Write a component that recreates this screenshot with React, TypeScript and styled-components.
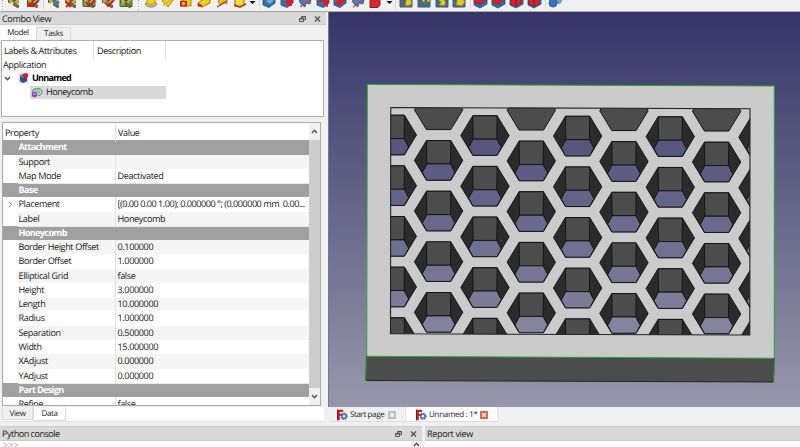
import React from "react";
import styled, { createGlobalStyle } from "styled-components";

const Global = createGlobalStyle`
  * { box-sizing: border-box; }
  html, body { margin: 0; padding: 0; overflow: hidden; }
  body {
    font: 9.1px/14px "Open Sans", "Noto Sans", sans-serif; letter-spacing: -.38px;
    text-rendering: geometricPrecision; color: #202020; background: #f0f0f0;
  }
`;

const Window = styled.div`
  width: 800px; height: 447px; overflow: hidden; background: #f0f0f0;
  display: grid; grid-template-rows: 12px 414px 21px;
`;
const Toolbar = styled.header`
  background: #f0f0f0; border-bottom: 1px solid #a9a9b0; overflow: hidden;
  svg { display: block; }
`;
const Main = styled.main`display: grid; grid-template-columns: 328px 472px; min-height: 0;`;
const Dock = styled.section`display: flex; flex-direction: column; min-width: 0; min-height: 0; height: 414px;`;
const Title = styled.div<{ $w: number; $h: number }>`
  flex: none; width: ${p => p.$w}px; height: ${p => p.$h}px; background: #d9d9d9;
  border-top: 1px solid #cdcdcd; border-bottom: 1px solid #cdcdcd;
  display: flex; align-items: center; justify-content: space-between; padding: 0 5px 0 2px;
`;
const Label = styled.span<{ $ls?: number; $size?: number }>`
  white-space: pre; letter-spacing: ${p => p.$ls ?? -0.38}px; font-size: ${p => p.$size ?? 9.1}px;
`;
const Buttons = styled.span`display: flex; gap: 8px;`;
const TopTabs = styled.div`display: flex; height: 15px; flex: none; align-items: flex-end;`;
const Tab = styled.div<{ $active?: boolean; $w: number }>`
  width: ${p => p.$w}px; height: ${p => (p.$active ? 15 : 13)}px; line-height: ${p => (p.$active ? 14 : 12)}px; text-align: center; font-size: 8px;
  background: ${p => (p.$active ? "#fff" : "#efefef")};
  border: 1px solid ${p => (p.$active ? "#fafafa" : "#dadada")}; border-bottom: 0;
`;
const TreeBox = styled.div`
  flex: none; width: 323px; height: 77px; margin-left: 1px; background: #fff; border: 1px solid #adadb3;
`;
const TreeHeader = styled.div`
  display: grid; grid-template-columns: 92px 72px; height: 17px; line-height: 19px; letter-spacing: -.43px;
  > span { border-right: 1px solid #e3e3e3; padding-left: 2px; white-space: nowrap; }
  > span + span { padding-left: 3px; }
`;
const TreeRow = styled.div<{ $pad: number; $h: number }>`
  display: flex; align-items: center; height: ${p => p.$h}px; padding-left: ${p => p.$pad}px;
`;
const Bold = styled.b`font-weight: 700; margin-left: 3px; color: #000; letter-spacing: -.75px;`;
const Chevron = styled.span`display: flex; margin-right: 7px;`;
const Selected = styled.div`
  display: flex; align-items: center; width: 136px; height: 13px; margin-top: 1px; background: #d9d9d9; gap: 3px; padding-left: 1px;
`;
const PropertyBox = styled.div`
  flex: none; margin: 5px 0 0 2px; width: 319px; height: 284px; background: #fff;
  border: 1px solid #a8a8ae; display: grid; grid-template-columns: 306px 11px; overflow: hidden;
`;
const Table = styled.div`overflow: hidden; height: 282px;`;
const HeaderRow = styled.div`
  display: grid; grid-template-columns: 113px 1fr; height: 17.3px; line-height: 19px;
  > span { padding-left: 2px; } > span:first-child { border-right: 1px solid #e2e2e2; }
`;
const Group = styled.div`
  height: 14.27px; line-height: 14.27px; background: #a0a0a0; color: #fff; font-weight: 700; padding-left: 15.5px; letter-spacing: -.65px;
`;
const Prop = styled.div<{ $alt: boolean; $long: boolean }>`
  height: 14.27px; line-height: 14.5px; display: grid; grid-template-columns: 15px 98px 193px;
  > span { background: ${p => (p.$alt ? "#f5f5f5" : "#fff")}; white-space: pre; border-bottom: 1px solid #e9e9e9; }
  > span:nth-child(2) { border-right: 1px solid #e2e2e2; padding-left: .5px; }
  > span:nth-child(3) { padding-left: 1.5px; letter-spacing: ${p => (p.$long ? -0.48 : -0.38)}px; }
`;
const Expander = styled.i`display: grid; place-items: center; background: #fff; height: 14px;`;
const Scroll = styled.div`
  background: #cdcdcd; display: flex; flex-direction: column; justify-content: space-between; height: 282px;
`;
const ScrollButton = styled.div`height: 17px; background: #f0f0f0; display: grid; place-items: center;`;
const BottomTabs = styled.div`
  display: flex; flex: none; margin: 1px 0 0 2px; width: 322px; height: 15px; background: #fff; border-bottom: 1px solid #e2e2e2;
`;
const BottomTab = styled.div<{ $active?: boolean }>`
  width: ${p => (p.$active ? 33 : 31)}px; height: ${p => (p.$active ? 14 : 13)}px; line-height: 13px;
  text-align: center; font-size: 8px;
  background: ${p => (p.$active ? "#fff" : "#f0f0f0")}; border: 1px solid #dcdcdc; border-top: 0;
`;
const View = styled.section`display: flex; flex-direction: column; height: 414px; > svg { display: block; flex: none; }`;
const DocTabs = styled.div`display: flex; height: 15px; margin-left: 1px;`;
const DocTab = styled.div<{ $active?: boolean }>`
  display: flex; align-items: center; width: ${p => (p.$active ? 92 : 77)}px; height: 15px;
  padding: 2px 9px 0 ${p => (p.$active ? 9 : 7)}px; gap: 2px; color: #222;
  background: ${p => (p.$active ? "#fff" : "#f0f0f0")}; border-bottom: 1px solid #dedede;
  border-right: 1px solid #e2e2e2;
  > svg { flex: none; }
  > svg:last-child { margin-left: auto; }
`;
const Bottom = styled.footer`display: grid; grid-template-columns: 422px 375px; gap: 3px;`;
const Console = styled.div`background: #fff; display: flex; flex-direction: column; height: 21px;`;
const ConsoleBody = styled.div`display: flex; justify-content: space-between; color: #a5a5a5; line-height: 9px; height: 6px; font-size: 8.5px; letter-spacing: .6px; padding-left: 3px;`;
const ConsoleScroll = styled.div`width: 11px; height: 6px; background: #f0f0f0; display: grid; place-items: end center;`;

const WindowButtons = () => (
  <Buttons>
    <svg width="7" height="8" viewBox="0 0 7 8" fill="none" stroke="#555">
      <path d="M2.5 2.8V1.5h4v3.2H5M.5 3.5h4v3h-4zM.5 4h4M2.5 2h4" />
    </svg>
    <svg width="7" height="8" viewBox="0 0 7 8" stroke="#555" strokeWidth="1.4"><path d="M1 1.5l5 5M6 1.5l-5 5" /></svg>
  </Buttons>
);

const Arrow = ({ up }: { up?: boolean }) => (
  <svg width="7" height="5" viewBox="0 0 7 5" fill="none" stroke="#505050" strokeWidth="1.3">
    <path d={up ? "M1 4l2.5-2.7L6 4" : "M1 1l2.5 2.7L6 1"} />
  </svg>
);

const FreeCadIcon = () => (
  <svg width="12" height="12" viewBox="0 0 12 12">
    <path d="M1 .7h6.3v2.4H3.8v1.7h2.5v2.3H3.8v4.2H1z" fill="#cb2229" />
    <path d="M1 .7h1v10.6H1z" fill="#8d141a" />
    <circle cx="8" cy="7.3" r="2.1" fill="none" stroke="#5478b2" strokeWidth="1.7" />
    <circle cx="8" cy="7.3" r="3.2" fill="none" stroke="#4268a5" strokeWidth="1.2" strokeDasharray="1.26 1.25" />
  </svg>
);
const CloseTab = ({ active }: { active?: boolean }) => (
  <svg width="8" height="8" viewBox="0 0 8 8">
    <rect width="8" height="8" rx=".8" fill={active ? "#dc6748" : "#bdbdbd"} />
    <path d="M2.3 2.3l3.4 3.4M5.7 2.3L2.3 5.7" stroke="#fff" strokeWidth="1.3" />
  </svg>
);

type Tool = { x: number; kind: "sketch" | "pad" | "cut" | "pattern" | "dress" | "sphere"; v: number };
const tools: Tool[] = [
  ...[14, 33, 54, 71, 89, 108, 126].map((x, v) => ({ x, kind: "sketch" as const, v })),
  ...[151, 168, 186, 204, 222, 240].map((x, v) => ({ x, kind: "pad" as const, v })),
  ...[269, 287, 305, 323, 340, 358, 375].map((x, v) => ({ x, kind: "cut" as const, v })),
  ...[406, 424, 442, 459].map((x, v) => ({ x, kind: "pattern" as const, v })),
  ...[480, 498, 516, 534].map((x, v) => ({ x, kind: "dress" as const, v })),
  { x: 555, kind: "sphere", v: 0 },
];

const ToolGlyph = ({ kind, v }: Tool) => {
  switch (kind) {
    case "sketch":
      return (
        <>
          {(v === 4 || v === 6) && <path d="M-6-1H6V6.5H-6z" fill="#7aa557" stroke="#39701c" />}
          {v === 1 && <path d="M-6-1H3V7H-6z" fill="#b52725" />}
          <path d="M-6-1H4L5 3 1 4-1 2-6 3z" fill="#5d584a" />
          <path d="M-5 0l3-1 1 3-3 2zM0 2l4-3 1 2-3 3z" fill="#c4b433" />
          <path d="M0 3l5 2.5-1 2.5-5-3z" fill="#77704d" stroke="#3f3d2b" strokeWidth=".6" />
          {v === 2 && <path d="M0 0l6 2-2 3-5-2z" fill="#4b79b7" />}
          {v === 3 && <path d="M-5 2l5 5M0 2l-5 5" stroke="#c31a1f" strokeWidth="1.8" />}
          {(v === 4 || v === 5 || v === 1) && <path d="M-3 2l3 4 6-6" fill="none" stroke="#bd242b" strokeWidth="2" />}
        </>
      );
    case "pad":
      return v === 0 ? (
        <><path d="M-6 4c3-3 9-3 12 0-2 4-10 4-12 0z" fill="#c9c1a0" stroke="#8b812f" /><path d="M-4-1h8v4c-2 2-6 2-8 0z" fill="#f1d526" stroke="#8f7900" strokeWidth=".7" /></>
      ) : v === 1 ? (
        <><path d="M-6 1L0 7 6-1 3-2H-2z" fill="#edce27" stroke="#967b00" strokeWidth=".8" /><path d="M-5 6L4-1" stroke="#dc9a29" /></>
      ) : v === 2 ? (
        <><path d="M-5 1L5-2V6H-5z" fill="#f0cf1c" stroke="#a66b00" strokeWidth=".8" /><path d="M-6 1H1V6.5H-6z" fill="#d31920" /><circle cx="-2.5" cy="3.5" r="1.8" fill="#f0cf1c" /></>
      ) : v === 3 ? (
        <><path d="M-6 3L1-2 6 0V3L-2 7-6 6z" fill="#edcd1f" stroke="#8d7c00" /><path d="M-6 3l4 2v2l-4-1z" fill="#cf2025" /></>
      ) : v === 4 ? (
        <><path d="M-4 1L1-2 5 0 5 4 1 2-2 5z" fill="#e6c922" stroke="#8c7900" strokeWidth=".8" /><path d="M-5 7L5 1" stroke="#cb2229" strokeWidth="1.3" /></>
      ) : (
        <><path d="M-5-2H4V5L0 7-5 6z" fill="#f3df3d" stroke="#827400" /><path d="M-6 5L0 7 6 4" fill="none" stroke="#bf2925" strokeWidth="1.4" /></>
      );
    case "cut":
      return v === 2 || v === 5 ? (
        <><path d="M-6 1L-1-2 6 0 5 4 1 3 0 7-4 4z" fill="#4b80b9" stroke="#28466e" strokeWidth=".7" /><path d="M-5 7L5 0" stroke="#cf3a45" strokeWidth="1.2" /></>
      ) : v === 6 ? (
        <path d="M-5-2H5V5L3 7.5H-5z" fill="#dc252a" stroke="#6d2940" />
      ) : (
        <><path d="M-6-1L6-1V3L0 7.5-6 5z" fill="#3470b3" stroke="#1e426f" strokeWidth=".8" /><path d={v === 0 ? "M-3 1l3-2 5 1-4 4z" : v === 1 ? "M1-1H5V6C-3 6-3 1 1-1z" : v === 3 ? "M-4-1L5-2V7L1 6V2H-4z" : "M-5 3L1-2 6 0-1 6z"} fill={v === 0 ? "#7ca5cd" : "#db1d25"} /></>
      );
    case "pattern":
      return (
        <><path d="M-6 0H6V7H-6z" fill="#416d91" stroke="#365a79" />
          <path d={v === 0 ? "M0 0l5-1 1 5-4 2-3-1z" : v === 1 ? "M-2-1H1V2H-2zM3-1H6V2H3z" : v === 2 ? "M-4 0l5-1 3 3-2 4-5-1 2-3z" : "M-2-1H4L6 2 3 6-3 5z"} fill="#e3ca21" stroke="#897c17" strokeWidth=".8" />
          {v === 0 && <path d="M-5 3h3v3z" fill="#dd292a" />}</>
      );
    case "dress":
      return (
        <><path d="M-6-1H7V4L0 8-6 5z" fill="#3068a7" stroke="#254974" strokeWidth=".8" />
          <path d={v < 2 ? "M-5-1H6L1 4-6 2z" : "M-5-1H5V4L0 6-5 4z"} fill="#d5222b" stroke="#a5151e" strokeWidth=".8" />
          {v > 1 && <path d="M0-1V6" stroke="#691d33" />}</>
      );
    default:
      return <><circle cx="3" cy="0" r="4" fill="#6d9bc8" /><circle cx="-2" cy="3" r="4" fill="#3a76b5" stroke="#2c5f99" /></>;
  }
};

const BodyIcon = () => (
  <svg width="11" height="12" viewBox="0 0 11 12">
    <path d="M.5.5h10v11H.5z" fill="#dcdcdc" />
    <path d="M2 4l3-2 4 2v5l-4 2-3-2z" fill="#2d4f7f" /><path d="M2 4l3-2 4 2-4 2z" fill="#5f86b3" />
    <path d="M5 2l3-1 2 1v3L8 6 5 5z" fill="#d71d27" />
  </svg>
);
const CombIcon = () => (
  <svg width="12" height="11" viewBox="0 0 12 11" fill="none">
    <path d="M1.5 5.5C1.7 3 4 1.5 6.5 1.5s4.5 1.4 4.5 3.4S9 8.5 6.5 8.5" stroke="#67a879" strokeWidth="1.4" />
    <path d="M3 6c1-3 5-3 6-1M5 7c0-2 3-2 4-.5" stroke="#6aad7b" />
    <circle cx="3.5" cy="7.5" r="2.7" fill="#8f35c7" /><path d="M2 7h3.4" stroke="#e7ccf4" />
  </svg>
);

const gray = "#4c4c4c";
const dark = "#2b2b2b";
const skyTop = [53, 53, 103];
const skyBottom = [151, 151, 171];
const skyAt = (y: number) =>
  `rgb(${skyTop.map((c, i) => Math.round(c + ((skyBottom[i] - c) * (y - 12)) / 395)).join(",")})`;

const Cell = ({ x, y }: { x: number; y: number }) => (
  <g transform={`translate(${x} ${y})`} stroke="#111" strokeWidth=".9" strokeLinejoin="round">
    <path d="M-12.2-19.8H12.2L24.2 0 12.2 19.8H-12.2L-24.2 0z" fill={dark} />
    <path d="M-12.2-19.8H12.2L11.8 3.6H-11.8z" fill={gray} />
    <path d="M-11.8 3.6H11.8L16.3 12 12 19.8H-12L-16.3 12z" fill={skyAt(y + 12)} />
  </g>
);

const Model = () => {
  const cells = Array.from({ length: 9 }, (_, c) => {
    const x = 392.3 + 46.33 * c;
    const top = (c % 2 ? 160.1 : 135) + (x - 391) * 0.0058;
    return Array.from({ length: 5 }, (_, r) => <Cell key={`${c}-${r}`} x={x} y={top + r * 50.65} />);
  });
  return (
    <svg width="472" height="395" viewBox="328 12 472 395">
      <defs>
        <linearGradient id="view" gradientUnits="userSpaceOnUse" x1="0" y1="12" x2="0" y2="407">
          <stop stopColor={skyAt(12)} /><stop offset="1" stopColor={skyAt(407)} />
        </linearGradient>
        <clipPath id="opening"><path d="M390.8 107.5L750 108.8 749.8 335 390.5 333.8z" /></clipPath>
      </defs>
      <path d="M328 12H800V407H328z" fill="url(#view)" />
      <path d="M366.5 355L774 357.5 773.5 382 366 380.5z" fill={gray} stroke="#222" />
      <path d="M367.3 84.4L774.3 86V358.3L366.7 356.3z" fill="#cbcbcb" stroke="#28a32b" strokeWidth="1" />
      <path d="M366.7 356L366.2 380.5M774 358L773.5 382" stroke="#28902b" />
      <g clipPath="url(#opening)">
        {[1, 3, 5, 7].map(c => (
          <path key={c} transform={`translate(${392.3 + 46.33 * c} ${109.5 + c * .25})`} d="M-24.2 0L-12.2 19.8H12.2L24.2 0 12.2-19.8H-12.2z" fill={gray} stroke="#151515" />
        ))}
        {cells}
      </g>
      <path d="M390.8 107.5L750 108.8 749.8 335 390.5 333.8z" fill="none" stroke="#222" strokeWidth="1.1" />
      <path d="M328.5 12V407" stroke="#777795" />
    </svg>
  );
};

type PropertyGroup = { name: string; rows: [string, string, boolean][] };
const groups: PropertyGroup[] = [
  { name: "Attachment", rows: [["Support", "", true], ["Map Mode", "Deactivated", false]] },
  { name: "Base", rows: [["Placement", "[(0.00 0.00 1.00); 0.000000 °; (0.000000 mm  0.00...", false], ["Label", "Honeycomb", true]] },
  { name: "Honeycomb", rows: [
    ["Border Height Offset", "0.100000", true], ["Border Offset", "1.000000", false], ["Elliptical Grid", "false", true],
    ["Height", "3.000000", false], ["Length", "10.000000", true], ["Radius", "1.000000", false],
    ["Separation", "0.500000", true], ["Width", "15.000000", false], ["XAdjust", "0.000000", true], ["YAdjust", "0.000000", false],
  ] },
  { name: "Part Design", rows: [["Refine", "false", false]] },
];

export default function App() {
  return (
    <>
      <Global />
      <Window>
        <Toolbar>
          <svg width="800" height="11" viewBox="0 0 800 11">
            {tools.map(t => <g key={t.x} transform={`translate(${t.x} 0)`}><ToolGlyph {...t} /></g>)}
            <path d="M249.5 1h6l-3 3zM386.5 1h6l-3 3z" fill="#111" />
            <path d="M43.5 0v9M259.5 0v9M395.5 0v9M470.5 0v9M545.5 0v9" stroke="#d5d5d5" />
            <path d="M2.5 0v10M138.5 0v10" stroke="#aaa" strokeDasharray="1 2" />
          </svg>
        </Toolbar>
        <Main>
          <Dock>
            <Title $w={326} $h={13}><Label>Combo View</Label><WindowButtons /></Title>
            <TopTabs><Tab $active $w={36}>Model</Tab><Tab $w={35}>Tasks</Tab></TopTabs>
            <TreeBox>
              <TreeHeader><span>Labels &amp; Attributes</span><span>Description</span></TreeHeader>
              <TreeRow $pad={1} $h={14}>Application</TreeRow>
              <TreeRow $pad={2} $h={12}><Chevron><Arrow /></Chevron><BodyIcon /><Bold>Unnamed</Bold></TreeRow>
              <TreeRow $pad={28} $h={15}><Selected><CombIcon /><Label $ls={-0.5}>Honeycomb</Label></Selected></TreeRow>
            </TreeBox>
            <PropertyBox>
              <Table>
                <HeaderRow><span>Property</span><span>Value</span></HeaderRow>
                {groups.map(g => (
                  <React.Fragment key={g.name}>
                    <Group>{g.name}</Group>
                    {g.rows.map(([name, value, alt]) => (
                      <Prop key={name} $alt={alt} $long={value.length > 40}>
                        <Expander>{name === "Placement" && (
                          <svg width="5" height="7" viewBox="0 0 5 7" fill="none" stroke="#888"><path d="M1 1l2.7 2.5L1 6" /></svg>
                        )}</Expander>
                        <span>{name}</span><span>{value}</span>
                      </Prop>
                    ))}
                  </React.Fragment>
                ))}
              </Table>
              <Scroll><ScrollButton><Arrow up /></ScrollButton><ScrollButton><Arrow /></ScrollButton></Scroll>
            </PropertyBox>
            <BottomTabs><BottomTab>View</BottomTab><BottomTab $active>Data</BottomTab></BottomTabs>
          </Dock>
          <View>
            <Model />
            <DocTabs>
              <DocTab><FreeCadIcon /><Label $size={8}>Start page</Label><CloseTab /></DocTab>
              <DocTab $active><FreeCadIcon /><Label $size={8} $ls={-0.3}>Unnamed : 1*</Label><CloseTab active /></DocTab>
            </DocTabs>
          </View>
        </Main>
        <Bottom>
          <Console>
            <Title $w={422} $h={15}><Label $ls={-0.52}>Python console</Label><WindowButtons /></Title>
            <ConsoleBody>&gt;&gt;&gt;<ConsoleScroll><Arrow up /></ConsoleScroll></ConsoleBody>
          </Console>
          <Console><Title $w={375} $h={15}><Label>Report view</Label></Title></Console>
        </Bottom>
      </Window>
    </>
  );
}
